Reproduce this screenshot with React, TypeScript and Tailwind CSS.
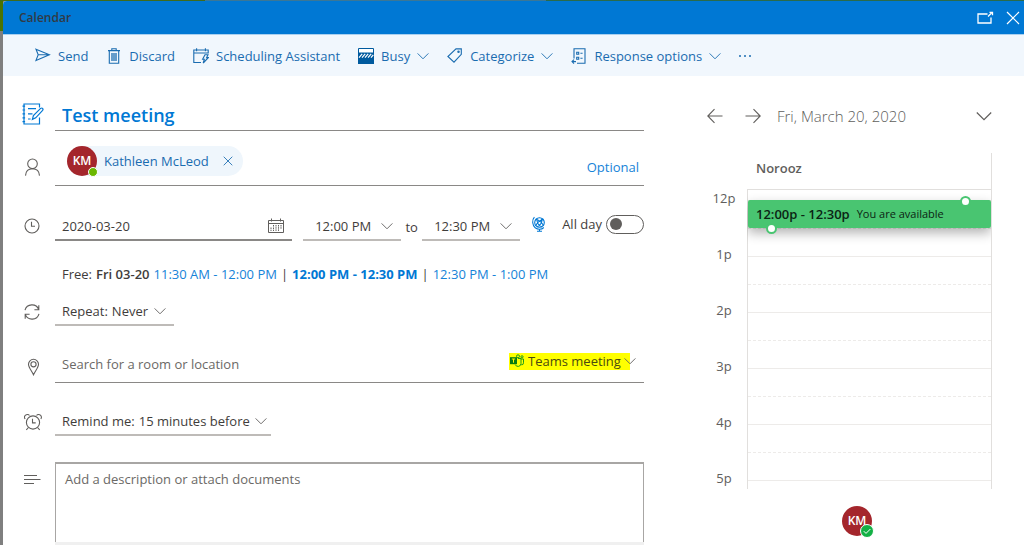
import React, { useState } from 'react';

const ChevronIcon: React.FC<{ className?: string }> = ({ className = 'h-3 w-3' }) => (
  <svg className={`pointer-events-none shrink-0 ${className}`} viewBox="0 0 12 12" fill="none" stroke="currentColor" strokeWidth="0.9" aria-hidden="true">
    <path d="M0.6 3.4 6 8.8l5.4-5.4" />
  </svg>
);

const SendIcon = () => (
  <svg className="h-4 w-4" viewBox="0 0 16 16" fill="none" stroke="currentColor" strokeWidth="1.1" aria-hidden="true">
    <path d="M1 1.2 14.4 6.8 1 12.4 3.2 6.8zM3.2 6.8h11" />
  </svg>
);

const TrashIcon = () => (
  <svg className="h-4 w-4" viewBox="0 0 16 16" fill="none" stroke="currentColor" strokeWidth="1.1" aria-hidden="true">
    <path d="M2 2.6h12M5.8 2.5V.7h4.4v1.7M3.3 2.8v12.4h9.4V2.8" />
    <path d="M6 5v8M8 5v8M10 5v8" strokeWidth="1.3" />
  </svg>
);

const SchedulingIcon = () => (
  <svg className="h-4 w-4" viewBox="0 0 16 16" fill="none" stroke="currentColor" strokeWidth="1.1" aria-hidden="true">
    <path d="M8 14.5H.8V2h14.4v3.5M.8 5h14.4M3.6.3v3M12.4.3v3" />
    <path d="M12 6.8h3l-1.4 2.8h1.7l-5.1 5.4 1.1-3.7H9.6z" />
  </svg>
);

const BusyIcon = () => (
  <svg className="h-4 w-4" viewBox="0 0 16 16" aria-hidden="true">
    <path d="M.5.5h15v15H.5z" fill="#fff" stroke="#005a9e" />
    <path d="M0 4.5h16V16H0z" fill="#005a9e" />
    <path d="m1 9.600 3.200-3.800M4 9.600l3.200-3.800M7 9.600l3.200-3.800M10 9.600l3.200-3.800M13 9.600l2.300-2.700" stroke="#fff" strokeWidth="1.2" />
  </svg>
);

const TagIcon = () => (
  <svg className="h-4 w-4" viewBox="0 0 16 16" fill="none" stroke="currentColor" strokeWidth="1.1" aria-hidden="true">
    <path d="M9 .9h5.3v5.4L7 14.200.9 8.500z" />
    <circle cx="11.5" cy="3.7" r=".7" />
  </svg>
);

const ResponseIcon = () => (
  <svg className="h-4 w-4" viewBox="0 0 16 16" fill="none" stroke="currentColor" strokeWidth="1.1" aria-hidden="true">
    <path d="M3 10.5V.8h11v14.4H6" />
    <path d="M5.7 4.2h2v2h-2zM9.4 5.200h2.200M5.700 9.200h2v2h-2zM9.400 10.200h2.200M5 13.600H1M3 11.600l-2 2 2 2" />
  </svg>
);

const PopOutIcon = () => (
  <svg className="h-[18px] w-[18px]" viewBox="0 0 18 18" fill="none" stroke="currentColor" strokeWidth="1.3" aria-hidden="true">
    <path d="M11.500 5H2v9h13V8.500M12 7.500l3.500-3.500M13.500 3.300h3v3" />
  </svg>
);

const CloseIcon: React.FC<{ className?: string }> = ({ className = '' }) => (
  <svg className={className} viewBox="0 0 14 14" fill="none" stroke="currentColor" strokeWidth="1.2" aria-hidden="true">
    <path d="m1 1 12 12M13 1 1 13" />
  </svg>
);

const NotebookIcon = () => (
  <svg className="h-[22px] w-[22px] text-[#0078d4]" viewBox="0 0 22 22" fill="none" stroke="currentColor" strokeWidth="1.2" aria-hidden="true">
    <path d="M17.5 4.5V1H2v20h15.5v-6.500" />
    <path d="M.5 3.200h2.600M.5 7h2.600M.5 10.900h2.600M.5 14.800h2.600M.5 18.600h2.600M6 5.600h8M6 10.800h4.500M6 16h2.600" />
    <path d="m10.400 16.400 1-3.800L18.600 5.400q1.200-.8 2 0 .8.900 0 2l-6.900 7.400z" />
  </svg>
);

const PersonIcon = () => (
  <svg className="h-[18px] w-[18px]" viewBox="0 0 18 18" fill="none" stroke="currentColor" strokeWidth="1.1" aria-hidden="true">
    <circle cx="8.5" cy="5.8" r="4.8" />
    <path d="M1.500 17.600c.300-4.200 3-6.800 7-6.800s6.700 2.600 7 6.800" />
  </svg>
);

const ClockIcon = () => (
  <svg className="h-4 w-4" viewBox="0 0 16 16" fill="none" stroke="currentColor" strokeWidth="1.1" aria-hidden="true">
    <circle cx="8" cy="8" r="7" />
    <path d="M7.5 3.8v4.5H11" />
  </svg>
);

const RepeatIcon = () => (
  <svg className="h-4 w-4" viewBox="0 0 16 16" fill="none" stroke="currentColor" strokeWidth="1.1" aria-hidden="true">
    <path d="M1 6.2A7.2 7.2 0 0 1 14.7 5.6M14.8 1.2v4.6h-4.4M15 9.8A7.2 7.2 0 0 1 1.3 10.4M1.2 14.8v-4.600h4.400" />
  </svg>
);

const PinIcon = () => (
  <svg className="h-[18px] w-[18px]" viewBox="0 0 18 18" fill="none" stroke="currentColor" strokeWidth="1.1" aria-hidden="true">
    <path d="M9.5 16.8C8 13.4 4.5 9.600 4.500 6.300a5 5 0 0 1 10 0c0 3.300-3.500 7.100-5 10.500z" />
    <circle cx="9.5" cy="6.3" r="2.6" />
  </svg>
);

const AlarmIcon = () => (
  <svg className="h-[18px] w-[18px]" viewBox="0 0 18 18" fill="none" stroke="currentColor" strokeWidth="1.1" aria-hidden="true">
    <circle cx="9" cy="9.5" r="6.6" />
    <path d="M8.5 5.8v4.1h3.2M1.2 6A2.7 2.7 0 1 1 5.500 2.500M16.800 6A2.700 2.700 0 1 0 12.500 2.500M4.500 14.500l-2.200 2.400M13.500 14.500l2.200 2.400" />
  </svg>
);

const LinesIcon = () => (
  <svg className="h-4 w-[18px]" viewBox="0 0 18 16" fill="none" stroke="currentColor" strokeWidth="1.2" aria-hidden="true">
    <path d="M0 3.5h13M0 7.5h16.5M0 11.5h10" />
  </svg>
);

const DateIcon = () => (
  <svg className="h-4 w-4" viewBox="0 0 16 16" fill="none" stroke="currentColor" aria-hidden="true">
    <path d="M.5 2.5h15v12H.5zM.5 5.5h15M3.5.5v3M12.5.5v3" />
    <path d="M5.5 7v1.500M8 7v6M10.500 7v6M13 7v4M3 9.500V13M5.500 9.500V13" strokeDasharray="1.5 .7" />
  </svg>
);

const GlobeIcon = () => (
  <svg className="h-4 w-4" viewBox="0 0 16 16" fill="none" stroke="currentColor" strokeWidth="1.1" aria-hidden="true">
    <circle cx="8.5" cy="6.5" r="4.8" />
    <path d="M4.7 3.4c3 .2 7 3.7 7.8 6.4M12.5 3.4c-3 .2-7 3.7-7.8 6.4M6 2.500c-.5 3.500 1.500 7.500 5 8.200M11 2.300c.5 3.500-1.500 7.500-5 8.400" />
    <path d="M3.400 1.200C.8 4 1.200 9 4.200 11.800c2.600 2 6.300 2 8.600-.300M8.500 13v2.200M6 15.200h5" />
  </svg>
);

const TeamsIcon = () => (
  <svg className="h-[14px] w-[14px] shrink-0" viewBox="0 0 14 14" fill="none" stroke="#1d9c1a" aria-hidden="true">
    <circle cx="8" cy="2.3" r="1.5" />
    <circle cx="12" cy="2.8" r="1.1" />
    <path d="M8 4.5h3v5a3 3 0 0 1-5.8 1M11 5h2.5v3.8a2 2 0 0 1-2.300 2" />
    <path d="M0 3.2h7v7H0z" fill="#0a7a12" stroke="none" />
    <path d="M1.8 5h3.400M3.500 5v3.700" stroke="#fff600" />
  </svg>
);

const ArrowIcon: React.FC<{ className?: string }> = ({ className = '' }) => (
  <svg className={`h-4 w-4 ${className}`} viewBox="0 0 16 16" fill="none" stroke="currentColor" strokeWidth="1.1" aria-hidden="true">
    <path d="M15.5 8H1M7.5 1.2.8 8l6.7 6.8" />
  </svg>
);

const commands = [
  { label: 'Send', icon: <SendIcon />, menu: false },
  { label: 'Discard', icon: <TrashIcon />, menu: false },
  { label: 'Scheduling Assistant', icon: <SchedulingIcon />, menu: false },
  { label: 'Busy', icon: <BusyIcon />, menu: true },
  { label: 'Categorize', icon: <TagIcon />, menu: true },
  { label: 'Response options', icon: <ResponseIcon />, menu: true },
];

const hours = ['12p', '1p', '2p', '3p', '4p', '5p'];

interface RowProps {
  icon?: React.ReactNode;
  className: string;
  children: React.ReactNode;
}

const Row: React.FC<RowProps> = ({ icon, className, children }) => (
  <div className={`grid grid-cols-[52px_1fr] ${className}`}>
    <div className="flex items-center pl-[21px] text-[#605e5c]">{icon}</div>
    {children}
  </div>
);

const Avatar: React.FC<{ children: React.ReactNode }> = ({ children }) => (
  <span className="relative flex h-[30px] w-[30px] shrink-0 items-center justify-center rounded-full bg-[#a4262c] text-xs font-semibold text-white">
    KM
    {children}
  </span>
);

const TimeSelect: React.FC<{ label: string; time: string }> = ({ label, time }) => (
  <div className="flex h-7 w-[98px] items-center border-b-2 border-[#bebbb8] pr-2 pl-3">
    <select aria-label={label} defaultValue={time} className="min-w-0 flex-1 appearance-none outline-none">
      <option>{time}</option>
    </select>
    <ChevronIcon className="h-3 w-3 text-[#605e5c]" />
  </div>
);

const EventForm: React.FC = () => {
  const [title, setTitle] = useState('Test meeting');
  const [date, setDate] = useState('2020-03-20');
  const [allDay, setAllDay] = useState(false);

  return (
    <form className="flex min-w-0 flex-1 flex-col" onSubmit={(e) => e.preventDefault()}>
      <Row icon={<span className="-ml-0.5 pt-5"><NotebookIcon /></span>} className="h-[55px]">
        <input
          aria-label="Title"
          value={title}
          onChange={(e) => setTitle(e.target.value)}
          className="w-full border-b border-[#8a8886] pt-6 pl-[7px] text-lg font-semibold text-[#0078d4] outline-none"
        />
      </Row>

      <Row icon={<span className="pt-4"><PersonIcon /></span>} className="h-[55px]">
        <div className="flex items-center border-b border-[#8a8886] pt-1.5 pr-[5px] pl-3">
          <div className="flex h-[30px] items-center rounded-full bg-[#eff6fc] pr-2.5 text-[#1a6cb0]">
            <Avatar>
              <span className="absolute -right-px -bottom-px h-2.5 w-2.5 rounded-full border border-white bg-[#6bb700]" />
            </Avatar>
            <span className="ml-[7px]">Kathleen McLeod</span>
            <button type="button" aria-label="Remove Kathleen McLeod" className="ml-3.5">
              <CloseIcon className="h-2.5 w-2.5" />
            </button>
          </div>
          <input aria-label="Invite attendees" className="min-w-0 flex-1 outline-none" />
          <button type="button" className="mt-3 text-[#1683d8]">Optional</button>
        </div>
      </Row>

      <Row icon={<span className="pt-6"><ClockIcon /></span>} className="h-[55px]">
        <div className="flex items-end">
          <div className="flex h-7 min-w-0 flex-1 items-center border-b-2 border-[#8a8886] pr-2 pl-[7px]">
            <input
              aria-label="Date"
              value={date}
              onChange={(e) => setDate(e.target.value)}
              className="min-w-0 flex-1 outline-none"
            />
            <button type="button" aria-label="Pick a date" className="text-[#605e5c]"><DateIcon /></button>
          </div>
          <div className="ml-[11px] flex items-end">
            <TimeSelect label="Start time" time="12:00 PM" />
            <span className="w-[21px] pb-1 text-center">to</span>
            <TimeSelect label="End time" time="12:30 PM" />
          </div>
          <div className="flex h-8 items-center pb-0.5 pl-[11px]">
            <button type="button" aria-label="Time zone" className="text-[#0078d4]"><GlobeIcon /></button>
            <label className="ml-[15px] flex items-center gap-1">
              All day
              <input
                type="checkbox"
                role="switch"
                checked={allDay}
                onChange={(e) => setAllDay(e.target.checked)}
                className="flex h-[19px] w-[38px] appearance-none items-center rounded-full border border-[#605e5c] px-[3px] before:h-3 before:w-3 before:rounded-full before:bg-[#605e5c] checked:justify-end"
              />
            </label>
          </div>
        </div>
      </Row>

      <Row className="h-14 items-center pt-2.5">
        <div className="flex gap-1 pl-[7px] whitespace-nowrap">
          <span>Free:</span>
          <span className="font-semibold">Fri 03-20</span>
          <button type="button" className="text-[#1683d8]">11:30 AM - 12:00 PM</button>
          <span>|</span>
          <button type="button" className="font-bold text-[#0078d4]">12:00 PM - 12:30 PM</button>
          <span>|</span>
          <button type="button" className="text-[#1683d8]">12:30 PM - 1:00 PM</button>
        </div>
      </Row>

      <Row icon={<RepeatIcon />} className="h-[29px]">
        <div className="flex w-[119px] items-center border-b-2 border-[#bebbb8] pr-2 pl-[7px]">
          <label htmlFor="repeat" className="mr-1">Repeat:</label>
          <select id="repeat" defaultValue="Never" className="min-w-0 flex-1 appearance-none outline-none">
            <option>Never</option>
          </select>
          <ChevronIcon className="h-3 w-3 text-[#605e5c]" />
        </div>
      </Row>

      <Row icon={<span className="pt-6"><PinIcon /></span>} className="h-[57px]">
        <div className="flex items-center border-b border-[#8a8886] pr-2 pl-[7px]">
          <input
            aria-label="Location"
            placeholder="Search for a room or location"
            className="mt-5 min-w-0 flex-1 outline-none placeholder:text-[#6b6966]"
          />
          <div className="mt-3.5 flex items-center">
            <label htmlFor="online" className="flex h-[17px] items-center gap-1 bg-[#ffff00] pl-px text-[#4a4a10]">
              <TeamsIcon />
              <select id="online" aria-label="Online meeting" defaultValue="Teams meeting" className="w-[102px] appearance-none outline-none">
                <option>Teams meeting</option>
              </select>
            </label>
            <ChevronIcon className="-ml-1.5 h-3 w-3 text-[#605e5c]" />
          </div>
        </div>
      </Row>

      <Row icon={<span className="flex h-[29px] items-center"><AlarmIcon /></span>} className="h-[53px] items-end">
        <div className="flex h-[29px] w-[216px] items-center border-b-2 border-[#bebbb8] pr-1 pl-[7px]">
          <label htmlFor="remind" className="mr-1">Remind me:</label>
          <select id="remind" defaultValue="15 minutes before" className="min-w-0 flex-1 appearance-none outline-none">
            <option>15 minutes before</option>
          </select>
          <ChevronIcon className="h-3 w-3 text-[#605e5c]" />
        </div>
      </Row>

      <Row icon={<span className="self-start pt-2.5"><LinesIcon /></span>} className="flex-1 pt-[26px]">
        <div className="flex flex-col border-b-3 border-[#f0f0f0]">
          <textarea
            aria-label="Description"
            placeholder="Add a description or attach documents"
            className="block min-h-20 w-full flex-1 resize-none border-x border-t-2 border-[#a8a6a4] px-[9px] py-[5px] outline-none placeholder:text-[#6b6966]"
          />
        </div>
      </Row>
    </form>
  );
};

const DayPane: React.FC = () => (
  <aside className="w-[324px] shrink-0 pr-8 pl-[7px] text-[#605e5c]">
    <div className="flex h-[77px] items-center pt-0.5">
      <button type="button" aria-label="Previous day"><ArrowIcon /></button>
      <button type="button" aria-label="Next day" className="ml-[22px]"><ArrowIcon className="rotate-180" /></button>
      <span className="ml-4 text-[15px] font-light">Fri, March 20, 2020</span>
      <button type="button" aria-label="Choose date" className="ml-auto">
        <ChevronIcon className="h-4 w-4" />
      </button>
    </div>

    <div className="flex">
      <div className="w-10 pt-[17px] pl-px">
        {hours.map((hour) => (
          <div key={hour} className="flex h-14 w-8 items-center justify-center">{hour}</div>
        ))}
      </div>
      <div className="h-[336px] flex-1 overflow-hidden border-r border-[#e1dfdd]">
        <div className="flex h-9 items-center pl-[9px] font-semibold">
          <span className="pb-1.5">Norooz</span>
        </div>
        <div className="border-t border-l border-[#e1dfdd] pt-2.5">
          {hours.map((hour, i) => (
            <div key={hour} className="relative h-14 border-t border-[#edebe9]">
              <div className="h-7 border-b border-dashed border-[#edebe9]" />
              {i === 0 && (
                <div className="absolute inset-x-0 -top-px flex h-7 items-center gap-[7px] rounded-xs bg-[#49c571] pl-2 text-[#0b2414] shadow-[0_5px_12px_rgba(0,0,0,0.3)]">
                  <span className="font-semibold">12:00p - 12:30p</span>
                  <span className="text-[11px]">You are available</span>
                  <span className="absolute -top-1 right-5 h-[11px] w-[11px] rounded-full border-2 border-[#49c571] bg-white" />
                  <span className="absolute -bottom-1.5 left-[18px] h-[11px] w-[11px] rounded-full border-2 border-[#49c571] bg-white" />
                </div>
              )}
            </div>
          ))}
        </div>
      </div>
    </div>

    <div className="pl-[135px]">
      <Avatar>
        <span className="absolute -right-0.5 -bottom-0.5 flex h-[14px] w-[14px] items-center justify-center rounded-full border border-white bg-[#13b045]">
          <svg className="h-2 w-2" viewBox="0 0 8 8" fill="none" stroke="#fff" aria-hidden="true">
            <path d="m.8 4.2 2.2 2.2L7.4 2" />
          </svg>
        </span>
      </Avatar>
    </div>
  </aside>
);

const App: React.FC = () => (
  <div className="flex min-h-screen flex-col bg-[#7f7f7f] font-['Open_Sans','Noto_Sans',sans-serif] text-[13px] leading-5 text-[#3f3d3b]">
    <div className="flex h-px">
      <div className="w-1/5 bg-[#3f6b1c]" />
      <div className="w-1/3 bg-[#3b7796]" />
      <div className="flex-1 bg-[#2a6b4a]" />
    </div>
    <div className="flex flex-1">
      <div className="w-[3px] shrink-0">
        <div className="h-[30px] bg-[#4b7300]" />
      </div>
      <div className="flex min-w-0 flex-1 flex-col rounded-tl-sm bg-white">
        <header className="flex h-[34px] items-center rounded-tl-sm border-b border-[#a9d0f0] bg-[#0078d4] pr-1 pl-4">
          <h1 className="flex-1 text-xs font-semibold text-[#323a45]">Calendar</h1>
          <button type="button" aria-label="Open in new window" className="text-white"><PopOutIcon /></button>
          <button type="button" aria-label="Close" className="ml-3 text-white"><CloseIcon className="h-[14px] w-[14px]" /></button>
        </header>

        <div role="toolbar" aria-label="Event commands" className="flex h-[41px] items-center gap-[18px] bg-[#f1f7fd] pl-8 whitespace-nowrap text-[#1a6cb0]">
          {commands.map((command) => (
            <button key={command.label} type="button" className="flex items-center gap-[7px]">
              {command.icon}
              {command.label}
              {command.menu && <ChevronIcon />}
            </button>
          ))}
          <button type="button" aria-label="More commands" className="flex gap-[3px]">
            <span className="h-0.5 w-0.5 rounded-full bg-current" />
            <span className="h-0.5 w-0.5 rounded-full bg-current" />
            <span className="h-0.5 w-0.5 rounded-full bg-current" />
          </button>
        </div>

        <main className="flex flex-1">
          <EventForm />
          <div className="w-14 shrink-0" />
          <DayPane />
        </main>
      </div>
    </div>
  </div>
);

export default App;
